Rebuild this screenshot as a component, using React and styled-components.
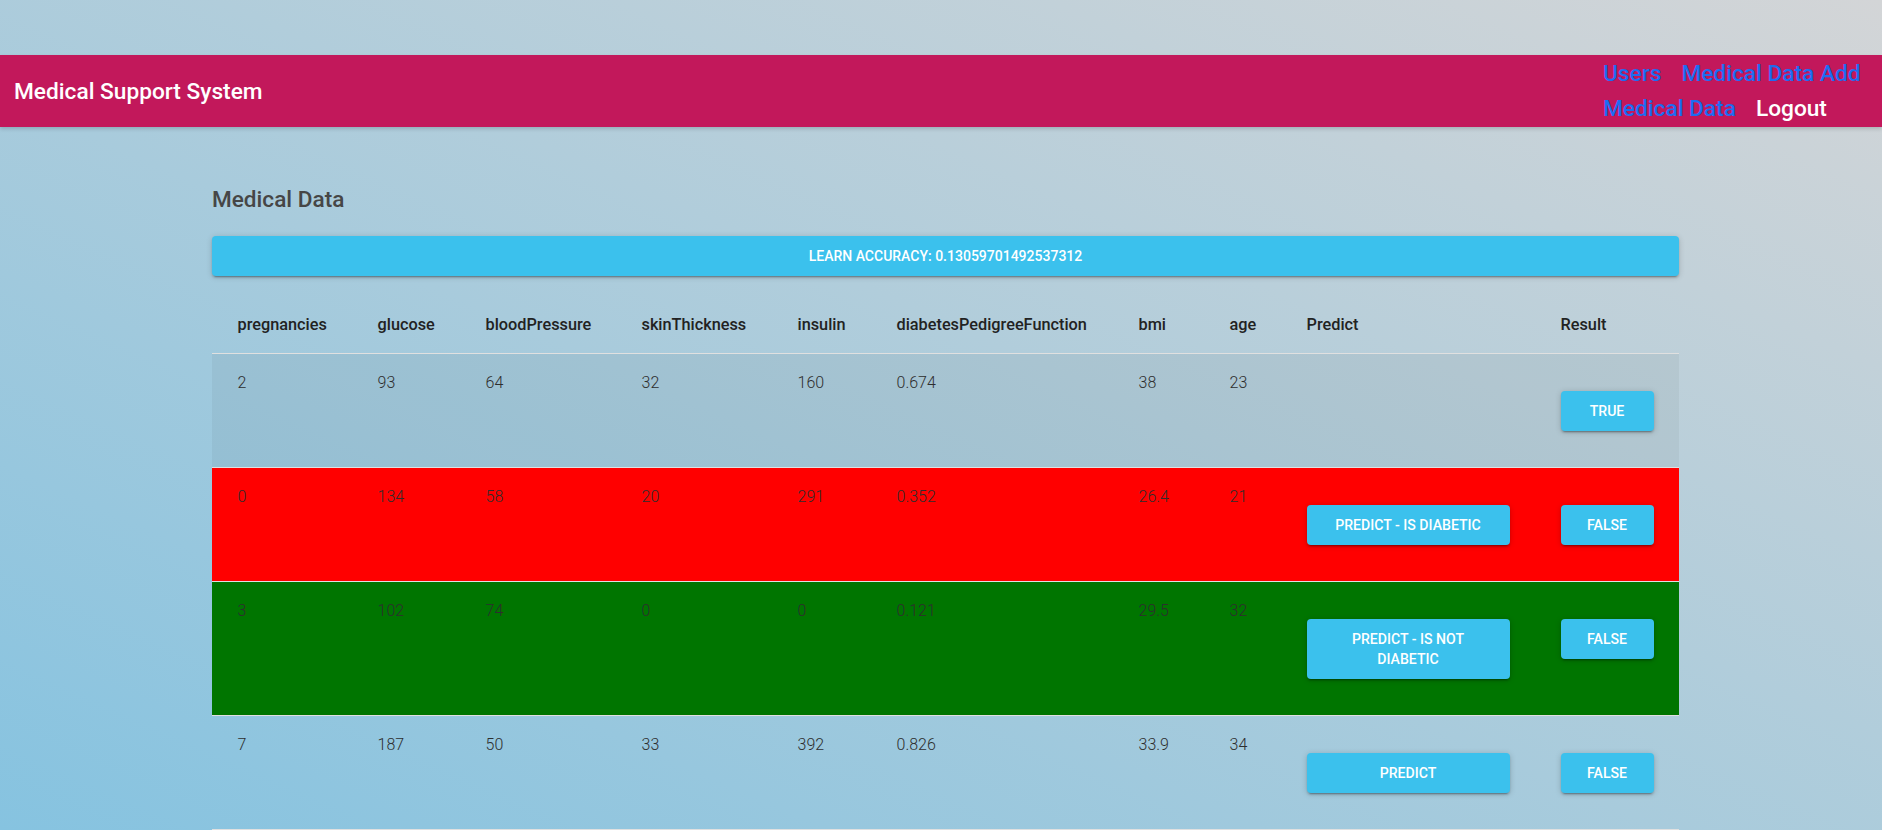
import React from "react";
import styled, { createGlobalStyle } from "styled-components";

const GlobalStyle = createGlobalStyle`
  html, body {
    margin: 0;
    padding: 0;
    height: 100%;
    overflow: hidden;
  }
  body {
    font-family: Roboto, "Noto Sans", "Liberation Sans", sans-serif;
  }
  * { box-sizing: border-box; }
`;

const Page = styled.div`
  height: 100vh;
  overflow: hidden;
  padding-top: 55px;
  background: linear-gradient(to top right, #86c3e0 0%, #d3d5d7 100%);
`;

const Navbar = styled.nav`
  height: 72px;
  background: #c2185b;
  display: flex;
  align-items: center;
  justify-content: space-between;
  padding-left: 14px;
  box-shadow: 0 2px 4px rgba(0, 0, 0, 0.16);
`;

const Brand = styled.div`
  color: #ffffff;
  font-size: 22.7px;
  font-weight: 500;
`;

const Links = styled.div`
  width: 268px;
  margin-right: 11px;
  display: flex;
  flex-wrap: wrap;
  column-gap: 20px;
  line-height: 35px;
`;

const NavLink = styled.a`
  font-size: 22.7px;
  font-weight: 500;
  color: ${(p) => (p.$active ? "#ffffff" : "#1d6cf2")};
  text-decoration: none;
  cursor: pointer;
`;

const Main = styled.main`
  width: 1467px;
  margin-left: 212px;
  padding-top: 60px;
`;

const Heading = styled.h2`
  margin: 0;
  font-size: 22.6px;
  line-height: 26px;
  font-weight: 500;
  color: #464646;
`;

const AccuracyBar = styled.div`
  margin-top: 23px;
  height: 40px;
  border-radius: 4px;
  background: #3bc1ed;
  color: #ffffff;
  font-size: 14px;
  font-weight: 500;
  text-transform: uppercase;
  display: flex;
  align-items: center;
  justify-content: center;
  box-shadow: 0 3px 1px -2px rgba(0, 0, 0, 0.2), 0 2px 2px 0 rgba(0, 0, 0, 0.14),
    0 1px 6px 0 rgba(0, 0, 0, 0.16);
`;

const Table = styled.table`
  margin-top: 21px;
  width: 1467px;
  border-collapse: collapse;
  table-layout: fixed;
`;

const Col = styled.col`
  width: ${(p) => p.$w}px;
`;

const HeadCell = styled.th`
  padding: 16px 25.5px;
  text-align: left;
  font-size: 16.3px;
  line-height: 24px;
  font-weight: 500;
  color: #222222;
  border-bottom: 1px solid #e0e0e0;
  white-space: nowrap;
`;

const Row = styled.tr`
  background: ${(p) => p.$bg};
`;

const Cell = styled.td`
  padding: 16px 25.5px;
  vertical-align: top;
  font-size: 16px;
  line-height: 26px;
  font-weight: 300;
  color: #2e2e2e;
  border-bottom: 1px solid #e0e0e0;
`;

const ActionButton = styled.button`
  display: block;
  width: 100%;
  margin: 20.5px 0;
  padding: 10px 20px;
  border: none;
  border-radius: 4px;
  background: #3bc1ed;
  color: #ffffff;
  font-family: Roboto, "Noto Sans", "Liberation Sans", sans-serif;
  font-size: 14.1px;
  line-height: 20px;
  font-weight: 500;
  text-transform: uppercase;
  cursor: pointer;
  box-shadow: 0 3px 1px -2px rgba(0, 0, 0, 0.2), 0 2px 2px 0 rgba(0, 0, 0, 0.14),
    0 1px 6px 0 rgba(0, 0, 0, 0.18);
`;

const columns = [
  { key: "pregnancies", w: 140 },
  { key: "glucose", w: 108 },
  { key: "bloodPressure", w: 156 },
  { key: "skinThickness", w: 156 },
  { key: "insulin", w: 99 },
  { key: "diabetesPedigreeFunction", w: 242 },
  { key: "bmi", w: 91 },
  { key: "age", w: 77 },
];

const rows = [
  {
    values: ["2", "93", "64", "32", "160", "0.674", "38", "23"],
    predict: null,
    result: "true",
    bg: "rgba(0, 0, 0, 0.045)",
  },
  {
    values: ["0", "134", "58", "20", "291", "0.352", "26.4", "21"],
    predict: "Predict - is diabetic",
    result: "false",
    bg: "#ff0000",
  },
  {
    values: ["3", "102", "74", "0", "0", "0.121", "29.5", "32"],
    predict: "Predict - is not diabetic",
    result: "false",
    bg: "#007500",
  },
  {
    values: ["7", "187", "50", "33", "392", "0.826", "33.9", "34"],
    predict: "Predict",
    result: "false",
    bg: "transparent",
  },
];

export default function App() {
  return (
    <>
      <GlobalStyle />
      <Page>
        <Navbar>
          <Brand>Medical Support System</Brand>
          <Links>
            <NavLink>Users</NavLink>
            <NavLink>Medical Data Add</NavLink>
            <NavLink>Medical Data</NavLink>
            <NavLink $active>Logout</NavLink>
          </Links>
        </Navbar>
        <Main>
          <Heading>Medical Data</Heading>
          <AccuracyBar>Learn accuracy: 0.13059701492537312</AccuracyBar>
          <Table>
            <colgroup>
              {columns.map((c) => (
                <Col key={c.key} $w={c.w} />
              ))}
              <Col $w={254} />
              <Col $w={144} />
            </colgroup>
            <thead>
              <tr>
                {columns.map((c) => (
                  <HeadCell key={c.key}>{c.key}</HeadCell>
                ))}
                <HeadCell>Predict</HeadCell>
                <HeadCell>Result</HeadCell>
              </tr>
            </thead>
            <tbody>
              {rows.map((r, i) => (
                <Row key={i} $bg={r.bg}>
                  {r.values.map((v, j) => (
                    <Cell key={j}>{v}</Cell>
                  ))}
                  <Cell>{r.predict && <ActionButton>{r.predict}</ActionButton>}</Cell>
                  <Cell>
                    <ActionButton>{r.result}</ActionButton>
                  </Cell>
                </Row>
              ))}
            </tbody>
          </Table>
        </Main>
      </Page>
    </>
  );
}
